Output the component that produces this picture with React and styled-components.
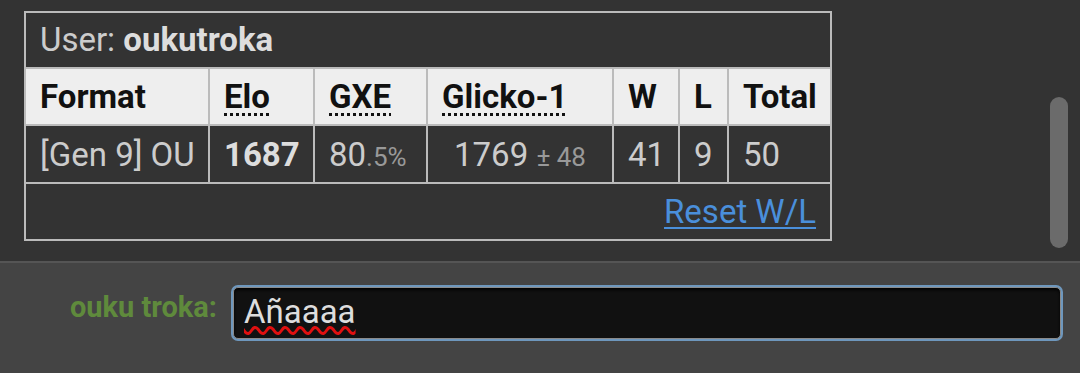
import React from "react";
import styled, { createGlobalStyle } from "styled-components";

const GlobalStyle = createGlobalStyle`
  html, body {
    margin: 0;
    padding: 0;
    background: #333;
  }
  body {
    font-family: Roboto, "Liberation Sans", Arial, sans-serif;
  }
`;

const Page = styled.div`
  width: 1080px;
  height: 373px;
  display: flex;
  flex-direction: column;
  overflow: hidden;
`;

const ChatLog = styled.div`
  position: relative;
  height: 263px;
  flex: none;
  box-sizing: border-box;
  padding: 11px 0 0 24px;
  background: #333;
  border-bottom: 2px solid #555;
`;

const ScrollThumb = styled.div`
  position: absolute;
  top: 97px;
  right: 12px;
  width: 18px;
  height: 151px;
  border-radius: 9px;
  background: #6b6b6b;
`;

const RatingTable = styled.table`
  border-collapse: collapse;
  table-layout: fixed;
  width: 806px;
  border: 2px solid #bbb;
  font-size: 33px;
  color: #ccc;
`;

const Cell = styled.td`
  height: ${(p) => p.$h || 56}px;
  padding: 0 14px;
  border: 2px solid #bbb;
  text-align: ${(p) => (p.$center ? "center" : p.$right ? "right" : "left")};
  font-weight: ${(p) => (p.$bold ? 700 : 400)};
  color: ${(p) => (p.$bold ? "#ddd" : "#ccc")};
  white-space: nowrap;
  vertical-align: middle;
`;

const TitleCell = styled(Cell)`
  height: 52px;
  line-height: 1;
  padding-bottom: 2px;
`;

const HeadCell = styled.th`
  height: 55px;
  padding: 0 14px;
  border: 2px solid #bbb;
  background: #eee;
  color: #111;
  font-weight: 700;
  text-align: left;
  white-space: nowrap;
`;

const Abbr = styled.abbr`
  text-decoration: underline dotted;
  text-decoration-thickness: 3px;
  text-underline-offset: 5px;
  cursor: help;
`;

const Dim = styled.small`
  font-size: 26px;
  color: #999;
`;

const ResetLink = styled.a`
  color: #4a8fdb;
  text-decoration: underline;
  text-decoration-thickness: 2px;
  text-underline-offset: 4px;
  cursor: pointer;
`;

const ChatForm = styled.div`
  flex: 1;
  background: #444;
  display: flex;
  align-items: flex-start;
  padding-top: 22px;
  box-sizing: border-box;
`;

const UserLabel = styled.label`
  width: 217px;
  margin-right: 16px;
  text-align: right;
  font-size: 29px;
  font-weight: 700;
  color: #5f8a3c;
  line-height: 44px;
`;

const ChatBox = styled.div`
  width: 828px;
  height: 52px;
  box-sizing: border-box;
  margin-top: 2px;
  padding: 0 10px;
  background: #111;
  border: 1px solid #8a8a8a;
  border-radius: 5px;
  box-shadow: 0 0 0 2px #6e97bd, inset 0 2px 3px #000;
  color: #ddd;
  font-size: 33px;
  line-height: 47px;
`;

const Misspelled = styled.span`
  text-decoration: underline wavy #e01010;
  text-decoration-thickness: 3px;
  text-underline-offset: 3px;
`;

const columns = [
  { name: "Format", width: 184 },
  { name: "Elo", width: 105, abbr: "Elo rating" },
  { name: "GXE", width: 113, abbr: "user's percentage chance of winning a random battle" },
  { name: "Glicko-1", width: 186, abbr: "Glicko-1 rating system" },
  { name: "W", width: 66 },
  { name: "L", width: 49 },
  { name: "Total", width: 103 },
];

const row = {
  format: "[Gen 9] OU",
  elo: 1687,
  gxe: ["80", ".5%"],
  glicko: 1769,
  dev: 48,
  w: 41,
  l: 9,
  total: 50,
};

export default function App() {
  return (
    <Page>
      <GlobalStyle />
      <ChatLog>
        <RatingTable>
          <colgroup>
            {columns.map((c) => (
              <col key={c.name} style={{ width: c.width }} />
            ))}
          </colgroup>
          <tbody>
            <tr>
              <TitleCell colSpan={7}>
                User: <strong style={{ color: "#ddd" }}>oukutroka</strong>
              </TitleCell>
            </tr>
            <tr>
              {columns.map((c) => (
                <HeadCell key={c.name}>
                  {c.abbr ? <Abbr title={c.abbr}>{c.name}</Abbr> : c.name}
                </HeadCell>
              ))}
            </tr>
            <tr>
              <Cell>{row.format}</Cell>
              <Cell $bold>{row.elo}</Cell>
              <Cell>
                {row.gxe[0]}
                <Dim>{row.gxe[1]}</Dim>
              </Cell>
              <Cell $center>
                {row.glicko} <Dim>± {row.dev}</Dim>
              </Cell>
              <Cell>{row.w}</Cell>
              <Cell>{row.l}</Cell>
              <Cell>{row.total}</Cell>
            </tr>
            <tr>
              <Cell colSpan={7} $right $h={55}>
                <ResetLink>Reset W/L</ResetLink>
              </Cell>
            </tr>
          </tbody>
        </RatingTable>
        <ScrollThumb />
      </ChatLog>
      <ChatForm>
        <UserLabel>ouku troka:</UserLabel>
        <ChatBox>
          <Misspelled>Añaaaa</Misspelled>
        </ChatBox>
      </ChatForm>
    </Page>
  );
}
